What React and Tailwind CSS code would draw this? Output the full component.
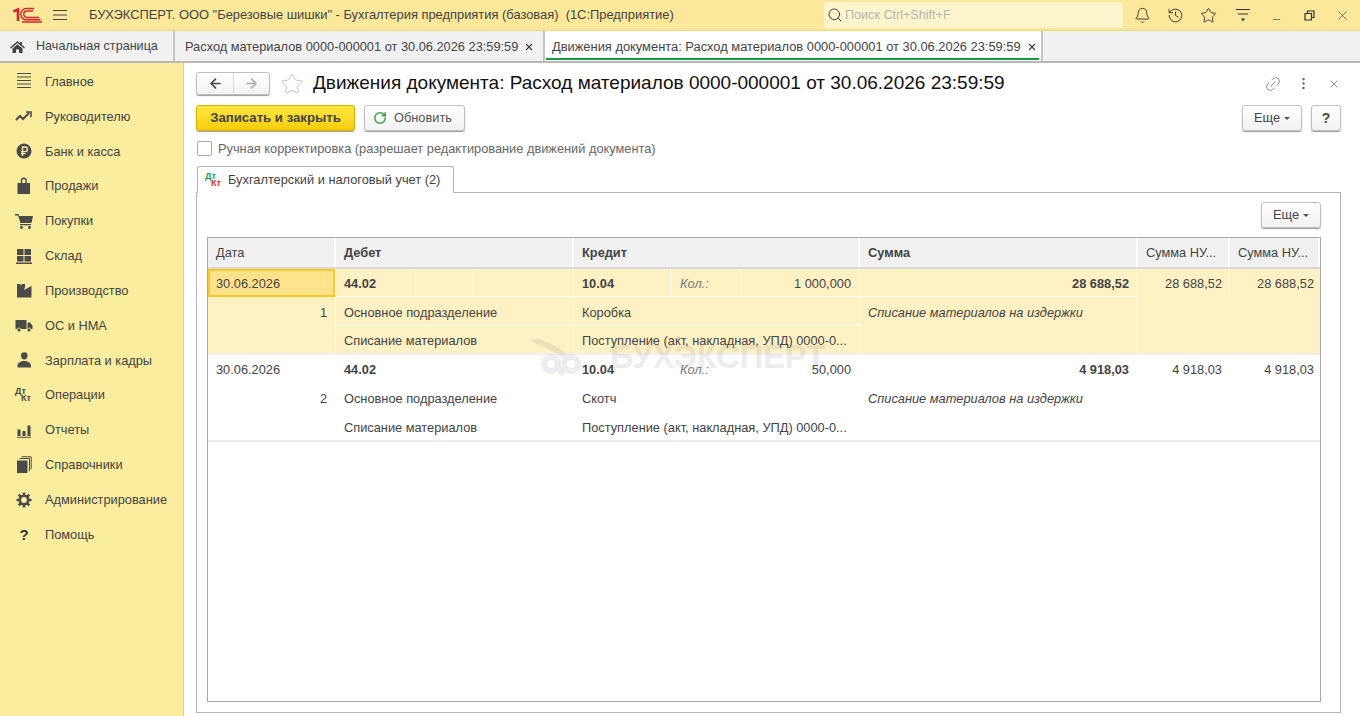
import { Bell, History, Star, Minus, X, Link2, MoreVertical, RotateCw, ArrowLeft, ArrowRight, Search } from 'lucide-react';

const font = { fontFamily: '"Liberation Sans", Arial, sans-serif' };

// sidebar icons drawn in a 20x20 box
function MenuIcon({ name }) {
  const c = '#4a4a4a';
  switch (name) {
    case 'main':
      return (
        <svg width="20" height="20" viewBox="0 0 20 20" stroke={c} strokeWidth="1.2">
          <path d="M3 2.500h14M3 6h14M3 9.500h14M3 13h14M3 16.500h14" />
        </svg>
      );
    case 'chief':
      return (
        <svg width="20" height="20" viewBox="0 0 20 20" fill="none" stroke={c} strokeWidth="2">
          <path d="M2 14l4-4 3 3 6-6" />
          <path d="M12 6h5v5" strokeWidth="1.6" />
        </svg>
      );
    case 'bank':
      return (
        <svg width="20" height="20" viewBox="0 0 20 20">
          <circle cx="10" cy="10" r="7.5" fill={c} />
          <path d="M8.500 15V6h2.600a2.200 2.200 0 010 4.600H7M7 12.600h4.500" fill="none" stroke="#fbed9e" strokeWidth="1.4" />
        </svg>
      );
    case 'sales':
      return (
        <svg width="20" height="20" viewBox="0 0 20 20" fill={c}>
          <path d="M3.500 7h12.500v11H3.500z" />
          <path d="M7.500 8V4.500a2.300 2.300 0 014.600 0V8" fill="none" stroke={c} strokeWidth="1.4" />
        </svg>
      );
    case 'buy':
      return (
        <svg width="20" height="20" viewBox="0 0 20 20" fill={c}>
          <path d="M1 3h3.500l.6 2H19l-1.500 7H6.500L4 4.500H1z" />
          <path d="M6 13h11v1.300H6z" />
          <circle cx="7.500" cy="16.500" r="1.400" />
          <circle cx="15.500" cy="16.500" r="1.400" />
        </svg>
      );
    case 'stock':
      return (
        <svg width="20" height="20" viewBox="0 0 20 20" fill={c}>
          <path d="M3 3h6.500v6H3zM10.500 3H17v6h-6.500zM3 10h6.500v5.500H3zM10.500 10H17v5.500h-6.500zM2 16.500h16V18H2z" />
        </svg>
      );
    case 'prod':
      return (
        <svg width="20" height="20" viewBox="0 0 20 20" fill={c}>
          <path d="M3 17.500V4h3.500v2L8 4h3v3l-1 3 7.500-4v11.500z" />
        </svg>
      );
    case 'os':
      return (
        <svg width="20" height="20" viewBox="0 0 20 20" fill={c}>
          <path d="M1.500 5h11v9h-11zM13.500 7.500H16l2.500 3V14h-5z" />
          <circle cx="5" cy="15" r="2" stroke="#fbed9e" strokeWidth=".8" />
          <circle cx="15" cy="15" r="2" stroke="#fbed9e" strokeWidth=".8" />
        </svg>
      );
    case 'hr':
      return (
        <svg width="20" height="20" viewBox="0 0 20 20" fill={c}>
          <path d="M7 5.500a3.300 3.300 0 016.600 0c0 2-1 4-3.300 4S7 7.500 7 5.500z" />
          <path d="M3.500 16c0-3.500 3.500-4.500 5-5h3.500c1.500.5 5 1.500 5 5v1.500H3.500z" />
        </svg>
      );
    case 'ops':
      return <DtKt top={c} bottom={c} />;
    case 'reports':
      return (
        <svg width="20" height="20" viewBox="0 0 20 20" fill={c}>
          <path d="M3.500 9.500h3V16h-3zM8.500 11h3v5h-3zM13.500 5.500h3V16h-3zM3 16.800h14v1H3z" />
        </svg>
      );
    case 'refs':
      return (
        <svg width="20" height="20" viewBox="0 0 20 20" fill={c}>
          <path d="M3 5.500h10.500V18H3z" />
          <path d="M5.500 3.500H15.500V16M7.500 1.800h9.700V14" fill="none" stroke={c} strokeWidth="1" />
        </svg>
      );
    case 'admin':
      return (
        <svg width="20" height="20" viewBox="0 0 20 20" fill="none" stroke={c}>
          <circle cx="10" cy="10" r="4.200" strokeWidth="2.600" />
          <path d="M10 2.500v3M10 14.500v3M2.500 10h3M14.500 10h3M4.700 4.700l2.100 2.100M13.200 13.200l2.100 2.100M15.300 4.700l-2.100 2.100M6.800 13.200l-2.100 2.100" strokeWidth="2.600" />
        </svg>
      );
    default:
      return <span className="text-[15px] font-bold text-[#333] leading-none">?</span>;
  }
}

function DtKt({ top, bottom }) {
  return (
    <span className="relative block w-[18px] h-[16px] text-[9px] font-bold leading-none">
      <span className="absolute left-0 top-0" style={{ color: top }}>Дт</span>
      <span className="absolute left-[6px] top-[7px]" style={{ color: bottom }}>Кт</span>
    </span>
  );
}

const menu = [
  ['main', 'Главное'],
  ['chief', 'Руководителю'],
  ['bank', 'Банк и касса'],
  ['sales', 'Продажи'],
  ['buy', 'Покупки'],
  ['stock', 'Склад'],
  ['prod', 'Производство'],
  ['os', 'ОС и НМА'],
  ['hr', 'Зарплата и кадры'],
  ['ops', 'Операции'],
  ['reports', 'Отчеты'],
  ['refs', 'Справочники'],
  ['admin', 'Администрирование'],
  ['help', 'Помощь'],
];

function Sidebar() {
  return (
    <div className="w-[184px] shrink-0 bg-[#fbed9e] border-r border-[#d9d0a0] pt-[1px]">
      {menu.map(([icon, label]) => (
        <div key={icon} className="h-[34.85px] flex items-center text-[12.8px] text-[#444]">
          <div className="w-[45px] flex justify-center pl-[3px]">
            <MenuIcon name={icon} />
          </div>
          <span className="whitespace-nowrap">{label}</span>
        </div>
      ))}
    </div>
  );
}

function TopBar() {
  return (
    <div className="h-[31px] shrink-0 bg-[#fbe89a] border-b border-[#e8d680] flex items-center text-[12.9px] text-[#444]">
      <div className="w-[53px] shrink-0 pl-[12px] flex items-center">
        <svg width="31" height="16" viewBox="0 0 31 16" fill="none" stroke="#d8232a">
          <path d="M1.500 4.500L6 2.500v11.500" strokeWidth="2.600" />
          <path d="M27 10.500H15a3 3 0 010-6.500h6M28.500 12.800H14.500a5.400 5.400 0 010-11.300h7.500M30 15H10" strokeWidth="1.400" />
        </svg>
      </div>
      <div className="w-[36px] shrink-0 flex justify-start">
        <svg width="14" height="12" viewBox="0 0 14 12" stroke="#444" strokeWidth="1">
          <path d="M0 1.500h14M0 6h14M0 10.500h14" />
        </svg>
      </div>
      <span className="whitespace-nowrap w-[735px] shrink-0">БУХЭКСПЕРТ. ООО "Березовые шишки" - Бухгалтерия предприятия (базовая)&nbsp; (1С:Предприятие)</span>
      <div className="w-[299px] shrink-0 h-[26px] bg-[#fdf5cc] rounded-[3px] flex items-center pl-[3px] gap-[2px] text-[#b5b5b5] text-[12.6px]">
        <Search size={16} strokeWidth={1.5} color="#444" />
        <span>Поиск Ctrl+Shift+F</span>
      </div>
      <div className="flex items-center ml-[2px] shrink-0 text-[#333]">
        <div className="w-[34px] flex justify-center"><Bell size={17} strokeWidth={1.3} /></div>
        <div className="w-[33px] flex justify-center"><History size={17} strokeWidth={1.3} /></div>
        <div className="w-[33px] flex justify-center"><Star size={17} strokeWidth={1.3} /></div>
        <div className="w-[35px] flex justify-center">
          <svg width="16" height="15" viewBox="0 0 16 15" fill="#333" stroke="#333" strokeWidth="1">
            <path d="M1 1.500h14M3 6h10" />
            <path d="M6 10.500h4l-2 3z" stroke="none" />
          </svg>
        </div>
        <div className="w-[33px] flex justify-center pt-[8px]"><Minus size={11} strokeWidth={1.3} /></div>
        <div className="w-[33px] flex justify-center">
          <svg width="11" height="11" viewBox="0 0 11 11" fill="none" stroke="#333" strokeWidth="1.200">
            <path d="M1 3.500h6.500V10H1zM3.500 3.500V1H10v6.500H7.500" />
          </svg>
        </div>
        <div className="w-[33px] flex justify-center"><X size={15} strokeWidth={1} /></div>
      </div>
    </div>
  );
}

function TabBar() {
  return (
    <div className="h-[32px] shrink-0 bg-[#f1f1f1] border-b-2 border-[#b8b8b8] flex text-[12.8px] text-[#444]">
      <div className="w-[175px] pl-[10px] pt-[1px] flex items-center gap-[11px] border-r-2 border-[#c4c4c4] whitespace-nowrap text-[12.6px]">
        <svg width="15" height="14" viewBox="0 0 15 14" fill="#444">
          <path d="M7.500 1L0 7.500l1 1 6.500-5.500 6.500 5.500 1-1-3-2.600V2h-2v1.200z" />
          <path d="M2.500 8.500L7.500 4.200l5 4.300V13H9V9.500H6V13H2.500z" />
        </svg>
        <span>Начальная страница</span>
      </div>
      <div className="w-[368px] pl-[10px] pt-[1px] flex items-center whitespace-nowrap">
        <span>Расход материалов 0000-000001 от 30.06.2026 23:59:59</span>
        <X size={10} strokeWidth={3} className="ml-[6px]" />
      </div>
      <div className="w-[500px] pl-[7px] pt-[1px] bg-white border-l-2 border-r-2 border-[#c4c4c4] flex items-center relative whitespace-nowrap text-[12.88px]">
        <span>Движения документа: Расход материалов 0000-000001 от 30.06.2026 23:59:59</span>
        <X size={10} strokeWidth={3} className="ml-[6px]" />
        <div className="absolute left-[1px] right-[2px] bottom-[1px] h-[2px] bg-[#169a45]" />
      </div>
    </div>
  );
}

function Btn({ className = '', children }) {
  return (
    <div className={`h-[26px] flex items-center border border-[#c0c0c0] rounded-[3px] bg-gradient-to-b from-white to-[#f2f2f2] shadow-[0_1px_1px_#999] ${className}`}>
      {children}
    </div>
  );
}

const moreBtn = (
  <Btn className="w-[60px] justify-center gap-[4px] text-[#444] text-[12.8px]">
    <span>Еще</span>
    <span className="w-0 h-0 border-x-[3px] border-x-transparent border-t-[3px] border-t-[#555]" />
  </Btn>
);

// one 3-line table record
function Record({ selected, date, num, sub, doc, qty, sum, nu }) {
  const bg = selected ? 'bg-[#fef1c3]' : 'bg-white';
  const line = selected ? 'border-white' : 'border-transparent';
  return (
    <div className={`grid grid-cols-[128px_238px_286px_278px_92px_90px] border-b-2 ${selected ? 'h-[86px] border-[#f0f0f0]' : 'h-[87px] border-[#ececec]'} ${bg} text-[12.8px] text-[#444]`}>
      <div className={`border-r ${line} flex flex-col`}>
        <div className={`h-[28px] flex items-center pt-[2px] ${selected ? 'bg-[#ffe28c] border-2 border-[#fac81e] pl-[6px]' : 'pl-[8px]'}`}>{date}</div>
        <div className="h-[29px] flex items-center justify-end pr-[8px] pt-[3px]">{num}</div>
      </div>
      <div className={`border-r ${line} flex flex-col`}>
        <div className={`h-[28px] border-b ${line} flex`}>
          <div className={`w-[80px] border-r ${line} flex items-center pl-[8px] pt-[2px] font-bold`}>44.02</div>
          <div className={`w-[58px] border-r ${line}`} />
        </div>
        <div className={`h-[29px] border-b ${line} flex items-center pl-[8px] pt-[3px]`}>Основное подразделение</div>
        <div className="flex-1 flex items-center pl-[8px] pt-[3px]">Списание материалов</div>
      </div>
      <div className={`border-r ${line} flex flex-col`}>
        <div className={`h-[28px] border-b ${line} flex`}>
          <div className={`w-[97px] border-r ${line} flex items-center pl-[8px] pt-[2px] font-bold`}>10.04</div>
          <div className={`w-[71px] border-r ${line} flex items-center pl-[9px] pt-[2px] italic text-[#777]`}>Кол.:</div>
          <div className="flex-1 flex items-center justify-end pr-[8px] pt-[2px]">{qty}</div>
        </div>
        <div className={`h-[29px] border-b ${line} flex items-center pl-[8px] pt-[3px]`}>{sub}</div>
        <div className="flex-1 flex items-center pl-[8px] pt-[3px] whitespace-nowrap">{doc}</div>
      </div>
      <div className={`border-r ${line} flex flex-col`}>
        <div className={`h-[28px] border-b ${line} flex items-center justify-end pr-[8px] pt-[2px] font-bold`}>{sum}</div>
        <div className="h-[29px] flex items-center pl-[8px] pt-[3px] italic">Списание материалов на издержки</div>
      </div>
      <div className={`border-r ${line} h-[28px] flex items-center justify-end pr-[7px] pt-[2px]`}>{nu}</div>
      <div className="h-[28px] flex items-center justify-end pr-[6px] pt-[2px]">{nu}</div>
    </div>
  );
}

function Table() {
  const head = 'bg-[#f1f1f1] border-r-2 border-white flex items-center pl-[8px] whitespace-nowrap overflow-hidden';
  return (
    <div className="relative h-[465px] mt-[9px] border border-[#a8a8a8] overflow-hidden">
      <div className="grid grid-cols-[128px_238px_286px_278px_92px_90px] h-[31px] border-b-2 border-[#d8d8d8] text-[12.8px] text-[#444]">
        <div className={head}>Дата</div>
        <div className={`${head} font-bold`}>Дебет</div>
        <div className={`${head} font-bold`}>Кредит</div>
        <div className={`${head} font-bold`}>Сумма</div>
        <div className={head}>Сумма НУ...</div>
        <div className={head}>Сумма НУ...</div>
      </div>
      <Record selected date="30.06.2026" num="1" sub="Коробка" doc="Поступление (акт, накладная, УПД) 0000-0..." qty="1 000,000" sum="28 688,52" nu="28 688,52" />
      <Record date="30.06.2026" num="2" sub="Скотч" doc="Поступление (акт, накладная, УПД) 0000-0..." qty="50,000" sum="4 918,03" nu="4 918,03" />
      {/* watermark */}
      <div className="absolute left-[322px] top-[101px] flex items-center gap-[8px] opacity-[0.1] pointer-events-none">
        <svg width="72" height="36" viewBox="0 0 72 36" fill="none" stroke="#5a5468" strokeWidth="6">
          <circle cx="21" cy="25" r="7" />
          <circle cx="41" cy="25" r="7" />
          <path d="M5 1l20 9 8 6M31 30v5" strokeLinecap="round" />
        </svg>
        <span className="text-[32.5px] font-bold text-[#5a5468] leading-none">БУХЭКСПЕРТ</span>
      </div>
    </div>
  );
}

function Content() {
  return (
    <div className="flex-1 min-w-0 bg-white pl-[12px] pr-[19px] relative">
      {/* title row */}
      <div className="h-[41px] flex items-center">
        <div className="w-[74px] h-[23px] shrink-0 flex border border-[#c0c0c0] rounded-[3px] bg-gradient-to-b from-white to-[#f2f2f2] shadow-[0_1px_1px_#999]">
          <div className="w-[37px] border-r border-[#d8d8d8] flex items-center justify-center"><ArrowLeft size={15} strokeWidth={2.5} color="#444" /></div>
          <div className="flex-1 flex items-center justify-center"><ArrowRight size={15} strokeWidth={2.5} color="#aaa" /></div>
        </div>
        <Star size={24} strokeWidth={1} color="#c4c4c4" className="ml-[10px] mr-[9px] shrink-0" />
        <h1 className="text-[19px] text-[#111] whitespace-nowrap">Движения документа: Расход материалов 0000-000001 от 30.06.2026 23:59:59</h1>
        <div className="ml-auto flex items-center text-[#888]">
          <Link2 size={18} strokeWidth={1.2} className="-rotate-45" />
          <MoreVertical size={15} strokeWidth={2} className="ml-[14px]" color="#666" />
          <X size={12} strokeWidth={1.5} className="ml-[17px] mr-[1px]" color="#666" />
        </div>
      </div>
      {/* command bar */}
      <div className="flex items-center h-[28px]">
        <div className="w-[159px] h-[26px] flex items-center justify-center rounded-[3px] border border-[#d4b000] bg-gradient-to-b from-[#ffe83c] to-[#f8cd00] shadow-[0_1px_1px_#999] text-[13.2px] font-bold text-[#444]">Записать и закрыть</div>
        <Btn className="w-[101px] ml-[9px] pl-[8px] gap-[7px] text-[12.8px] text-[#555]">
          <RotateCw size={14} strokeWidth={2.6} color="#3ca445" />
          <span>Обновить</span>
        </Btn>
        <div className="ml-auto flex items-center gap-[9px]">
          {moreBtn}
          <Btn className="w-[30px] justify-center font-bold text-[14px] text-[#444]">?</Btn>
        </div>
      </div>
      {/* checkbox */}
      <div className="h-[33px] flex items-center text-[12.8px] text-[#666]">
        <div className="ml-[1px] w-[15px] h-[15px] border border-[#aaa] rounded-[2px] bg-white mr-[6px]" />
        <span>Ручная корректировка (разрешает редактирование движений документа)</span>
      </div>
      {/* tab */}
      <div className="w-[257px] h-[27px] ml-[1px] border border-b-0 border-[#b4b4b4] rounded-t-[3px] bg-white flex items-center pl-[7px] gap-[5px] text-[12.8px] text-[#444] relative z-10 translate-y-[1px]">
        <DtKt top="#18a04a" bottom="#e03030" />
        <span className="whitespace-nowrap">Бухгалтерский и налоговый учет (2)</span>
      </div>
      <div className="h-[521px] border border-[#b4b4b4] pl-[10px] pr-[19px] pt-[9px]">
        <div className="flex justify-end">{moreBtn}</div>
        <Table />
      </div>
    </div>
  );
}

export default function App() {
  return (
    <div className="h-[716px] w-[1360px] overflow-hidden flex flex-col bg-white" style={font}>
      <TopBar />
      <TabBar />
      <div className="flex flex-1 min-h-0">
        <Sidebar />
        <Content />
      </div>
    </div>
  );
}
